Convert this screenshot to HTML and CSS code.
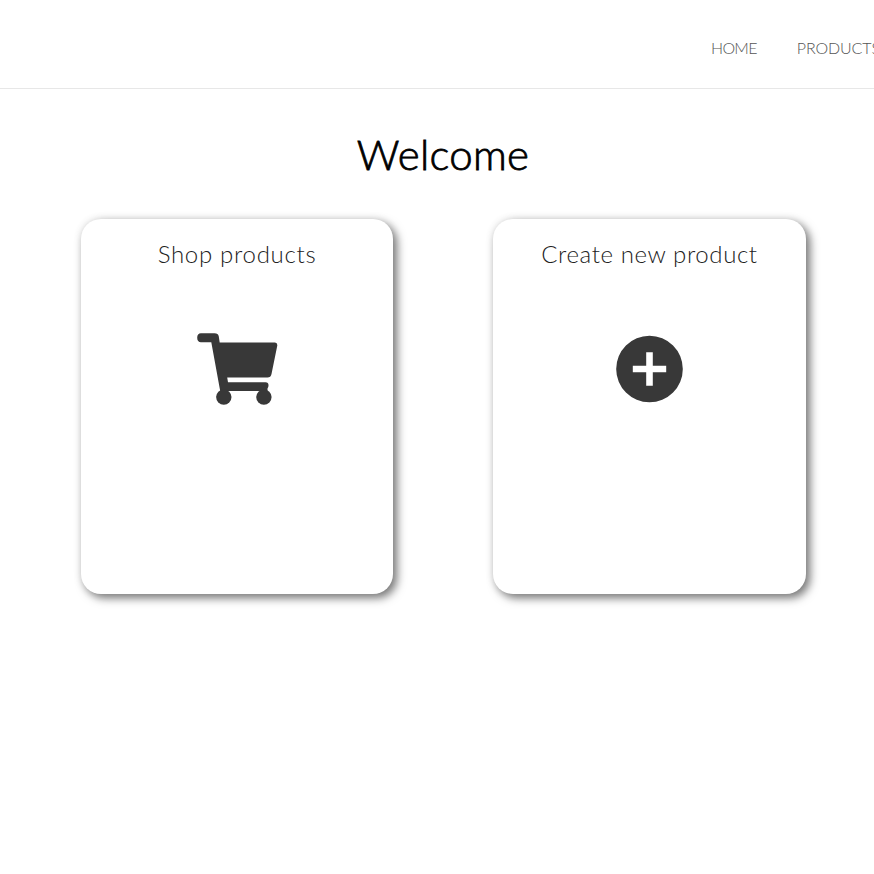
FILE: index.html
```html
<!DOCTYPE html>
<html lang="en">
<head>
<meta charset="utf-8">
<title>Welcome</title>
<link rel="stylesheet" href="styles.css">
</head>
<body>
<header class="header">
  <nav class="nav">
    <a class="nav-link home">HOME</a>
    <a class="nav-link products">PRODUCTS</a>
  </nav>
</header>
<main class="main">
  <h1 class="title"><span>Welcome</span></h1>
  <div class="cards">
    <section class="card">
      <h2 class="card-title shop"><span>Shop products</span></h2>
      <svg class="icon" viewBox="0 0 100 100" aria-hidden="true">
        <path d="M14 13.2H27.5Q31.2 13.2 31.8 16.5L32.7 22.5H88Q90.8 22.8 90.2 26L84.5 54Q83.8 57.6 80.5 57.6H40.2L41 62.3H78.5Q81.6 62.3 81.5 65.5Q81.5 67 80.5 68.4V71H33.2L24.3 22.2H14Q10.2 22 10.2 17.7Q10.2 13.2 14 13.2Z"/>
        <circle cx="36.8" cy="77.1" r="7.7"/>
        <circle cx="76.9" cy="77.1" r="7.7"/>
      </svg>
    </section>
    <section class="card">
      <h2 class="card-title create"><span>Create new product</span></h2>
      <svg class="icon" viewBox="0 0 100 100" aria-hidden="true">
        <path fill-rule="evenodd" d="M49.5 15.7a33.3 33.3 0 1 0 0 66.6a33.3 33.3 0 1 0 0-66.6ZM46.2 32.3H52.8V45.7H66.2V52.3H52.8V65.7H46.2V52.3H32.8V45.7H46.2Z"/>
      </svg>
    </section>
  </div>
</main>
</body>
</html>
```
FILE: styles.css
```css
* {
  box-sizing: border-box;
}

body {
  min-height: 100vh;
  margin: 0;
  overflow-x: hidden;
  background: #fff;
  color: #000;
  font-family: Lato, "Open Sans", sans-serif;
}

.header {
  height: 89px;
  padding: 36px 0 0 711px;
  border-bottom: 1px solid #e7e7e7;
}

.nav {
  display: flex;
  gap: 40px;
  white-space: nowrap;
}

.nav-link {
  font-size: 16px;
  font-weight: 300;
  line-height: 24px;
  color: #555;
}

.home {
  width: 46px;
  letter-spacing: -0.7px;
}

.products {
  letter-spacing: -0.1px;
}

.title {
  height: 52px;
  margin: 39px 0 0 12px;
  font-size: 42px;
  font-weight: 300;
  line-height: 52px;
  letter-spacing: 0.3px;
  text-align: center;
  -webkit-text-stroke: 0.8px #000;
}

.cards {
  display: grid;
  grid-template-columns: 312px 313px;
  column-gap: 100px;
  margin: 39px 0 0 81px;
}

.card {
  height: 375px;
  padding-top: 19px;
  border-radius: 20px;
  background: #fff;
  box-shadow: 4px 4px 10px #777, 0 0 8px rgba(0, 0, 0, 0.1);
  text-align: center;
}

.card-title {
  margin: 0;
  font-size: 24px;
  font-weight: 300;
  line-height: 32px;
  white-space: nowrap;
  color: #222;
}

.shop {
  letter-spacing: 0.7px;
}

.create {
  letter-spacing: 0.6px;
}

.icon {
  display: block;
  width: 100px;
  height: 100px;
  margin: 50px auto 0;
  fill: #383838;
}
```
